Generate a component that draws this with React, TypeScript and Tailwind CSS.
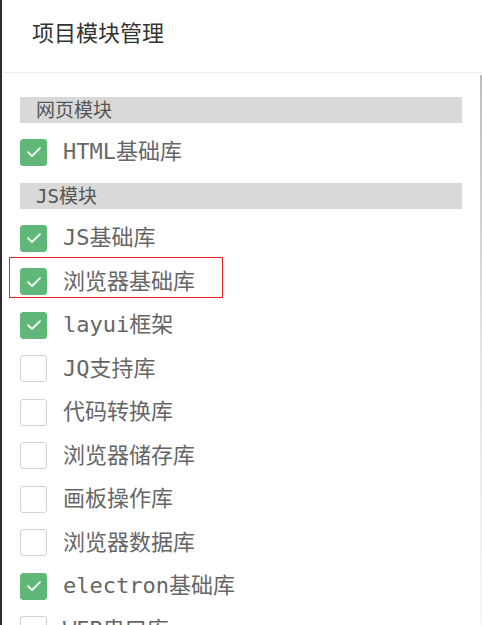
import { useState } from 'react';

type Item = { label: string; checked: boolean };
type Group = { title: string; items: Item[] };

const groups: Group[] = [
  { title: '网页模块', items: [{ label: 'HTML基础库', checked: true }] },
  {
    title: 'JS模块',
    items: [
      { label: 'JS基础库', checked: true },
      { label: '浏览器基础库', checked: true },
      { label: 'layui框架', checked: true },
      { label: 'JQ支持库', checked: false },
      { label: '代码转换库', checked: false },
      { label: '浏览器储存库', checked: false },
      { label: '画板操作库', checked: false },
      { label: '浏览器数据库', checked: false },
      { label: 'electron基础库', checked: true },
      { label: 'WEB串口库', checked: false },
    ],
  },
];

function CheckRow({ item }: { item: Item }) {
  const [on, setOn] = useState(item.checked);
  return (
    <div className="flex h-[43.5px] items-center gap-4 cursor-pointer" onClick={() => setOn(v => !v)}>
      <span
        className={`flex h-[27px] w-[27px] shrink-0 items-center justify-center rounded-[3px] border ${
          on ? 'border-[#5fb878] bg-[#5fb878]' : 'border-[#d2d2d2] bg-white'
        }`}
      >
        {on && (
          <svg width="16" height="12" viewBox="0 0 16 12" fill="none">
            <path d="M2 6.2 L6 10 L14 2.2" stroke="#fff" strokeWidth="1.8" strokeLinecap="round" strokeLinejoin="round" />
          </svg>
        )}
      </span>
      <span
        className="text-[22px] leading-none text-[#666]"
        style={{ fontFamily: '"DejaVu Sans Mono", "Noto Sans CJK SC", monospace' }}
      >
        {item.label}
      </span>
    </div>
  );
}

export default function App() {
  return (
    <div className="relative h-[625px] w-[482px] overflow-hidden border-l-2 border-[#2b2b2b] bg-white">
      {/* Header */}
      <div className="h-[73px] border-b border-[#ececec] pl-[30px] pt-[20px]">
        <h1
          className="text-[22px] leading-[22px] font-normal text-[#333]"
          style={{ fontFamily: '"Noto Sans CJK SC", sans-serif' }}
        >
          项目模块管理
        </h1>
      </div>

      {/* Body */}
      <div className="flex h-[552px]">
        <div className="flex-1 pl-[18px] pt-6">
          {groups.map((g, gi) => (
            <div key={g.title}>
              <div
                className={`flex h-[26px] w-[442px] items-center bg-[#d9d9d9] pl-4 text-[19px] leading-none text-[#555] ${
                  gi > 0 ? 'mt-[9px]' : ''
                } mb-[7.5px]`}
                style={{ fontFamily: '"DejaVu Sans Mono", "Noto Sans CJK SC", monospace' }}
              >
                {g.title}
              </div>
              {g.items.map(it => (
                <CheckRow key={it.label} item={it} />
              ))}
            </div>
          ))}
        </div>
        {/* scrollbar */}
        <div className="mt-[2px] w-[2px] bg-linear-to-b from-[#bdbdbd] via-[#e4e4e4] to-[#f6f6f6]" />
      </div>

      {/* annotation highlight */}
      <div className="pointer-events-none absolute left-[7px] top-[257px] h-[41px] w-[214px] border border-[#f02020]" />
    </div>
  );
}
